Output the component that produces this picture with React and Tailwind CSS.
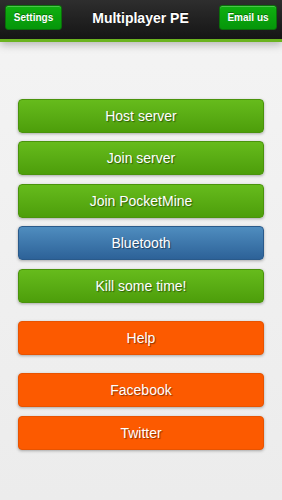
import React from "react";

const menu = [
	{ label: "Host server", kind: "green", mt: "mt-0" },
	{ label: "Join server", kind: "green", mt: "mt-[8px]" },
	{ label: "Join PocketMine", kind: "green", mt: "mt-[9px]" },
	{ label: "Bluetooth", kind: "blue", mt: "mt-[8px]" },
	{ label: "Kill some time!", kind: "green", mt: "mt-[9px]" },
	{ label: "Help", kind: "orange", mt: "mt-[18px]" },
	{ label: "Facebook", kind: "orange", mt: "mt-[18px]" },
	{ label: "Twitter", kind: "orange", mt: "mt-[9px]" },
];

const styles = {
	green: "bg-gradient-to-b from-[#66bb1c] to-[#4d9e0a] border-[#4a930c]",
	blue: "bg-gradient-to-b from-[#4f8dbf] to-[#2d6298] border-[#2a5a8a]",
	orange: "bg-[#fc5a00] border-[#e85300]",
};

function HeaderButton({ children }) {
	return (
		<button className="h-[25px] w-full whitespace-nowrap rounded-[3px] bg-gradient-to-b from-[#10b010] to-[#05960a] border border-[#0b6e0b] text-white text-[10px] font-bold shadow-[inset_0_1px_0_rgba(255,255,255,0.25)] [text-shadow:0_-1px_0_rgba(0,0,0,0.35)]">
			{children}
		</button>
	);
}

export default function App() {
	return (
		<div className="w-[282px] h-[500px] bg-gradient-to-b from-[#f4f4f4] to-[#ececec] font-['Liberation_Sans',Arial,sans-serif] overflow-hidden">
			{/* top bar */}
			<div className="relative h-[42px] bg-gradient-to-b from-[#2e2e2e] to-[#151515] border-b-[3px] border-[#6ab31f] shadow-[0_3px_8px_rgba(0,0,0,0.25)] flex items-start justify-between pl-[5px] pr-[5px] pt-[4px]">
				<div className="w-[57px]">
					<HeaderButton>Settings</HeaderButton>
				</div>
				<h1 className="text-white font-bold text-[14px] leading-[28px] [text-shadow:0_-1px_0_rgba(0,0,0,0.6)]">
					Multiplayer PE
				</h1>
				<div className="w-[58px]">
					<HeaderButton>Email us</HeaderButton>
				</div>
			</div>

			<div className="px-[18px] pt-[57px] flex flex-col">
				{menu.map((item) => (
					<button
						key={item.label}
						className={`${item.mt} h-[34px] w-full rounded-[4px] border ${styles[item.kind]} text-white text-[14px] shadow-[0_1px_3px_rgba(0,0,0,0.3)] [text-shadow:1px_1px_1px_rgba(0,0,0,0.45)]`}
					>
						{item.label}
					</button>
				))}
			</div>
		</div>
	);
}
